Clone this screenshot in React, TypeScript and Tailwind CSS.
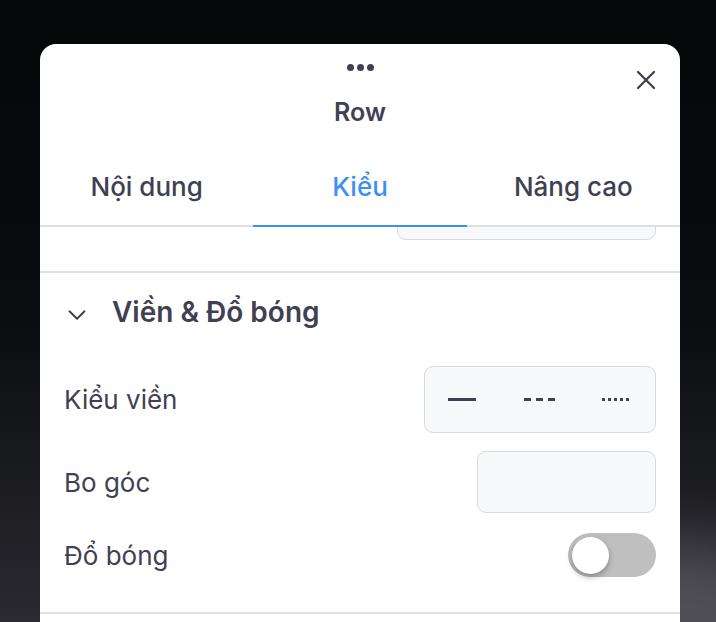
import { X, ChevronDown } from 'lucide-react';

const TABS = ['Nội dung', 'Kiểu', 'Nâng cao'];

function Dots() {
  return (
    <div className="flex justify-center gap-[3px]">
      <span className="w-[7px] h-[7px] rounded-full bg-[#3f4152]" />
      <span className="w-[7px] h-[7px] rounded-full bg-[#3f4152]" />
      <span className="w-[7px] h-[7px] rounded-full bg-[#3f4152]" />
    </div>
  );
}

function BorderStyles() {
  return (
    <div className="w-[232px] h-[67px] rounded-[9px] border-[1.5px] border-[#d9d9dd] bg-[#f8f9fb] grid grid-cols-3 items-center">
      <div className="flex justify-center">
        <span className="w-[28px] h-[3px] bg-[#3f4152] ml-[-2px]" />
      </div>
      <div className="flex justify-center gap-[5px]">
        <span className="w-[7px] h-[3px] bg-[#3f4152]" />
        <span className="w-[7px] h-[3px] bg-[#3f4152]" />
        <span className="w-[7px] h-[3px] bg-[#3f4152]" />
      </div>
      <div className="flex justify-center gap-[3.5px] ml-[-2px]">
        <span className="w-[2.5px] h-[2.5px] bg-[#3f4152]" />
        <span className="w-[2.5px] h-[2.5px] bg-[#3f4152]" />
        <span className="w-[2.5px] h-[2.5px] bg-[#3f4152]" />
        <span className="w-[2.5px] h-[2.5px] bg-[#3f4152]" />
        <span className="w-[2.5px] h-[2.5px] bg-[#3f4152]" />
      </div>
    </div>
  );
}

export default function App() {
  return (
    <div
      className="relative w-[716px] h-[622px] overflow-hidden bg-gradient-to-b from-[#060709] via-[#0b0c0f] to-[#2a2a30]"
      style={{ fontFamily: 'Inter, "Noto Sans", sans-serif' }}
    >
      {/* backdrop glow bottom-right */}
      <div className="absolute right-[-60px] bottom-[-80px] w-[180px] h-[160px] rounded-full bg-[#6b6870] opacity-60 blur-[30px]" />

      <div className="relative ml-[40px] mt-[44px] w-[640px] bg-white rounded-t-[16px] text-[#3f4152]">
        {/* header */}
        <div className="relative pt-[20px]">
          <Dots />
          <div className="mt-[27px] text-center text-[25px] leading-[28px] font-semibold">Row</div>
          <button className="absolute right-[18px] top-[20px] text-[#3f4152]">
            <X size={32} strokeWidth={1.7} />
          </button>
        </div>

        {/* tabs */}
        <div className="mt-[41px] grid grid-cols-3 border-b-2 border-[#dedede]">
          {TABS.map((t, i) => (
            <div
              key={t}
              className={
                i === 1
                  ? 'text-center text-[26px] leading-[32px] font-medium pt-[4px] pb-[22px] text-[#3d8ff2] border-b-2 border-[#3d8ff2] mb-[-2px]'
                  : 'text-center text-[26px] leading-[32px] font-medium pt-[4px] pb-[22px]'
              }
            >
              {t}
            </div>
          ))}
        </div>

        {/* scrolled-away field */}
        <div className="h-[46px] overflow-hidden border-b-2 border-[#e0e0e0] flex justify-end pr-[24px]">
          <div className="w-[259px] h-[44px] mt-[-31px] rounded-[9px] border-[1.5px] border-[#d9d9dd] bg-[#f8f9fb] shrink-0" />
        </div>

        {/* section */}
        <div className="px-[24px] pb-[35px] border-b-2 border-[#e0e0e0]">
          <div className="h-[78px] flex items-center gap-[20px]">
            <ChevronDown size={30} strokeWidth={1.5} className="ml-[-2px] mt-[6px]" />
            <span className="text-[28px] font-semibold">Viền &amp; Đổ bóng</span>
          </div>

          <div className="mt-[15px] flex items-center justify-between">
            <span className="text-[26px]">Kiểu viền</span>
            <BorderStyles />
          </div>

          <div className="mt-[18px] flex items-center justify-between">
            <span className="text-[26px]">Bo góc</span>
            <div className="w-[179px] h-[62px] rounded-[9px] border-[1.5px] border-[#d9d9dd] bg-[#f8f9fb]" />
          </div>

          <div className="mt-[20px] flex items-center justify-between">
            <span className="text-[26px]">Đổ bóng</span>
            <div className="w-[88px] h-[44px] rounded-full bg-[#bfbfbf] flex items-center px-[4px]">
              <span className="w-[37px] h-[37px] rounded-full bg-white shadow-[0_3px_6px_rgba(0,0,0,0.3)]" />
            </div>
          </div>
        </div>

        <div className="h-[40px]" />
      </div>
    </div>
  );
}
